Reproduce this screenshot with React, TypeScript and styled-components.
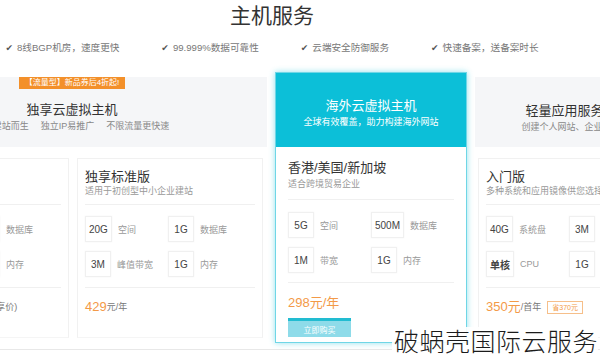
import styled, { createGlobalStyle } from 'styled-components';

const GlobalStyle = createGlobalStyle`
  html, body {
    margin: 0;
    padding: 0;
    background: #fff;
    overflow: hidden;
  }
  body {
    font-family: "Liberation Sans", "Noto Sans CJK SC", sans-serif;
    color: #333;
  }
`;

const CYAN = '#0cbfd8';
const ORANGE = '#f39a48';

const Page = styled.div`
  position: relative;
  width: 600px;
  height: 361px;
  overflow: hidden;
`;

const Inner = styled.div`
  width: 790px;
  margin-left: -123px;
`;

const Title = styled.h1`
  margin: 0;
  padding-top: 3px;
  font-size: 21px;
  line-height: 26px;
  font-weight: normal;
  color: #333;
  text-align: center;
`;

const Features = styled.ul`
  list-style: none;
  margin: 12px 0 0;
  padding: 0;
  display: flex;
  justify-content: center;
  gap: 42px;
  font-size: 9.6px;
  line-height: 14px;
  color: #777;
`;

const Feature = styled.li`
  display: flex;
  align-items: center;
  gap: 4px;
  white-space: nowrap;
  &::before {
    content: '✔';
    font-family: "DejaVu Sans", sans-serif;
    font-size: 9px;
    color: #555;
  }
`;

const Row = styled.div`
  margin-top: 17px;
  display: grid;
  grid-template-columns: 390px 192px 192px;
  gap: 8px;
  padding-bottom: 6px;
  border-bottom: 1px solid #e8e8e8;
`;

const Column = styled.section`
  margin-top: 5px;
  display: flex;
  flex-direction: column;
`;

const Head = styled.div`
  position: relative;
  height: 70px;
  background: #f5f6f8;
  display: flex;
  flex-direction: column;
  align-items: center;
`;

const Badge = styled.div`
  height: 12px;
  padding: 0 6px;
  background: #f3902a;
  color: #fff;
  font-size: 8px;
  line-height: 12px;
  white-space: nowrap;
`;

const HeadTitle = styled.div<{ $top: number; $light?: boolean }>`
  margin-top: ${(p) => p.$top}px;
  font-size: 13px;
  line-height: 18px;
  color: ${(p) => (p.$light ? '#fff' : '#333')};
  white-space: nowrap;
`;

const HeadSub = styled.div<{ $light?: boolean }>`
  margin-top: 1px;
  font-size: 9px;
  line-height: 12px;
  color: ${(p) => (p.$light ? '#fff' : '#888')};
  word-spacing: 9.5px;
  white-space: nowrap;
`;

const Body = styled.div<{ $pad: string }>`
  flex: 1;
  display: flex;
  gap: 8px;
  padding: ${(p) => p.$pad};
`;

const SubCard = styled.div`
  width: 186px;
  flex: none;
  box-sizing: border-box;
  border: 1px solid #f1f1f1;
  border-bottom-color: #f5f5f5;
  padding: 10px 7px 20px;
`;

const PlanName = styled.div`
  font-size: 13px;
  line-height: 16px;
  color: #333;
  white-space: nowrap;
`;

const PlanDesc = styled.div`
  font-size: 9px;
  line-height: 12px;
  color: #999;
  white-space: nowrap;
`;

const Divider = styled.div<{ $top: number }>`
  height: 1px;
  margin-top: ${(p) => p.$top}px;
  background: #f0f0f0;
`;

const Specs = styled.div<{ $top: number }>`
  margin-top: ${(p) => p.$top}px;
  display: grid;
  grid-template-columns: 83px 1fr;
  row-gap: 9px;
`;

const Spec = styled.div`
  display: flex;
  align-items: center;
  white-space: nowrap;
`;

const SpecValue = styled.span<{ $bold?: boolean }>`
  min-width: 26px;
  height: 26px;
  box-sizing: border-box;
  padding: 0 3px;
  display: inline-flex;
  align-items: center;
  justify-content: center;
  border: 1px solid #f0f0f0;
  box-shadow: 0 0 2px rgba(0, 0, 0, 0.04);
  font-size: 10px;
  color: #444;
  font-weight: ${(p) => (p.$bold ? 'bold' : 'normal')};
`;

const SpecLabel = styled.span`
  margin-left: 6px;
  font-size: 9px;
  color: #999;
`;

const Price = styled.div<{ $top: number }>`
  margin-top: ${(p) => p.$top}px;
  display: flex;
  align-items: center;
  line-height: 18px;
  white-space: nowrap;
`;

const Amount = styled.span`
  font-size: 13px;
  color: ${ORANGE};
`;

const Unit = styled.span<{ $accent?: boolean }>`
  font-size: ${(p) => (p.$accent ? '13px' : '9px')};
  color: ${(p) => (p.$accent ? ORANGE : '#777')};
`;

const SaveTag = styled.span`
  margin-left: 6px;
  height: 11px;
  padding: 0 4px;
  border: 1px solid #f6bf8a;
  font-size: 7px;
  line-height: 11px;
  color: ${ORANGE};
`;

const Featured = styled.section`
  display: flex;
  flex-direction: column;
  border: 1px solid #6fd6e6;
  box-shadow: 0 0 6px rgba(12, 191, 216, 0.45);
  background: #fff;
`;

const FeaturedHead = styled.div`
  height: 74px;
  box-sizing: border-box;
  padding-top: 24px;
  background: ${CYAN};
  display: flex;
  flex-direction: column;
  align-items: center;
`;

const FeaturedBody = styled.div`
  padding: 13px 12px 5px;
`;

const BuyButton = styled.button`
  margin-top: 6px;
  width: 63px;
  height: 19px;
  padding: 0;
  border: 0;
  border-top: 3px solid #22bcd1;
  background: #8edbe9;
  color: #fff;
  font-family: inherit;
  font-size: 8px;
`;

const Watermark = styled.div`
  position: absolute;
  right: 2px;
  bottom: 8px;
  padding: 0 0 0 2px;
  background: rgba(255, 255, 255, 0.9);
  font-family: "Noto Sans CJK SC", sans-serif;
  font-size: 25px;
  line-height: 26px;
  letter-spacing: 0.5px;
  font-weight: 300;
  color: #1b1b1b;
`;

type Item = [string, string, boolean?];

const Plan = ({
  name,
  desc,
  specs,
  children,
}: {
  name: string;
  desc: string;
  specs: Item[];
  children: React.ReactNode;
}) => (
  <SubCard>
    <PlanName>{name}</PlanName>
    <PlanDesc>{desc}</PlanDesc>
    <Divider $top={7} />
    <Specs $top={11}>
      {specs.map(([v, l, b]) => (
        <Spec key={l}>
          <SpecValue $bold={b}>{v}</SpecValue>
          <SpecLabel>{l}</SpecLabel>
        </Spec>
      ))}
    </Specs>
    <Divider $top={10} />
    <Price $top={10}>{children}</Price>
  </SubCard>
);

export default function App() {
  return (
    <Page>
      <GlobalStyle />
      <Inner>
        <Title>主机服务</Title>
        <Features>
          <Feature>8线BGP机房，速度更快</Feature>
          <Feature>99.999%数据可靠性</Feature>
          <Feature>云端安全防御服务</Feature>
          <Feature>快速备案，送备案时长</Feature>
        </Features>
        <Row>
          <Column>
            <Head>
              <Badge>【流量型】新品券后4折起!</Badge>
              <HeadTitle $top={12}>独享云虚拟主机</HeadTitle>
              <HeadSub>专为建站而生 独立IP易推广 不限流量更快速</HeadSub>
            </Head>
            <Body $pad="11px 0 5px 6px">
              <Plan
                name="独享基础版"
                desc="适用于个人及小微企业建站"
                specs={[
                  ['10G', '空间'],
                  ['1G', '数据库'],
                  ['2M', '峰值带宽'],
                  ['1G', '内存'],
                ]}
              >
                <Amount>299</Amount>
                <Unit>元/年（首年新用户独享价)</Unit>
              </Plan>
              <Plan
                name="独享标准版"
                desc="适用于初创型中小企业建站"
                specs={[
                  ['20G', '空间'],
                  ['1G', '数据库'],
                  ['3M', '峰值带宽'],
                  ['1G', '内存'],
                ]}
              >
                <Amount>429</Amount>
                <Unit>元/年</Unit>
              </Plan>
            </Body>
          </Column>

          <Featured>
            <FeaturedHead>
              <HeadTitle $top={0} $light>海外云虚拟主机</HeadTitle>
              <HeadSub $light>全球有效覆盖，助力构建海外网站</HeadSub>
            </FeaturedHead>
            <FeaturedBody>
              <PlanName>香港/美国/新加坡</PlanName>
              <PlanDesc style={{ marginTop: 2 }}>适合跨境贸易企业</PlanDesc>
              <Divider $top={9} />
              <Specs $top={12}>
                <Spec>
                  <SpecValue>5G</SpecValue>
                  <SpecLabel>空间</SpecLabel>
                </Spec>
                <Spec>
                  <SpecValue>500M</SpecValue>
                  <SpecLabel>数据库</SpecLabel>
                </Spec>
                <Spec>
                  <SpecValue>1M</SpecValue>
                  <SpecLabel>带宽</SpecLabel>
                </Spec>
                <Spec>
                  <SpecValue>1G</SpecValue>
                  <SpecLabel>内存</SpecLabel>
                </Spec>
              </Specs>
              <Divider $top={9} />
              <Price $top={11}>
                <Amount>298</Amount>
                <Unit $accent>元/年</Unit>
              </Price>
              <BuyButton>立即购买</BuyButton>
            </FeaturedBody>
          </Featured>

          <Column>
            <Head>
              <HeadTitle $top={25}>轻量应用服务器</HeadTitle>
              <HeadSub>创建个人网站、企业官网</HeadSub>
            </Head>
            <Body $pad="11px 0 5px 3px">
              <Plan
                name="入门版"
                desc="多种系统和应用镜像供您选择"
                specs={[
                  ['40G', '系统盘'],
                  ['3M', '带宽'],
                  ['单核', 'CPU', true],
                  ['1G', '内存'],
                ]}
              >
                <Amount>350</Amount>
                <Unit $accent>元</Unit>
                <Unit>/首年</Unit>
                <SaveTag>省370元</SaveTag>
              </Plan>
            </Body>
          </Column>
        </Row>
      </Inner>
      <Watermark>破蜗壳国际云服务</Watermark>
    </Page>
  );
}
